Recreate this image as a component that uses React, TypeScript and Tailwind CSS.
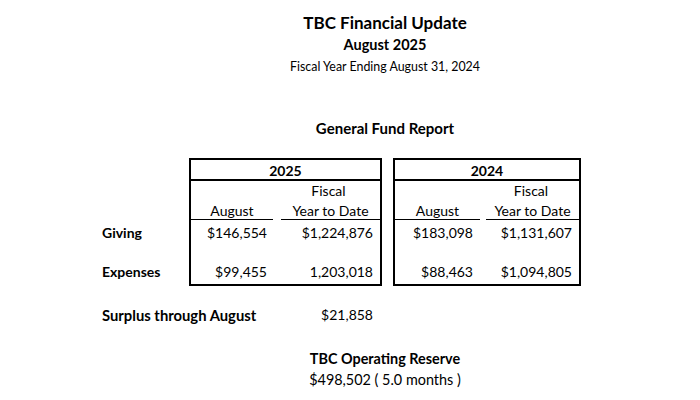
export default function App() {
  const font = { fontFamily: "Lato, 'Open Sans', sans-serif" };
  return (
    <div className="w-[700px] h-[400px] bg-white text-black overflow-hidden" style={font}>
      {/* headings, centered over the tables */}
      <div className="ml-[189px] w-[392px] text-center">
        <div className="pt-[12px] h-[36px] text-[17px] font-bold leading-[22px]">TBC Financial Update</div>
        <div className="h-[23px] text-[14.5px] font-bold leading-[18px]">August 2025</div>
        <div className="h-[60px] text-[12.4px] leading-[16px]">Fiscal Year Ending August 31, 2024</div>
        <div className="h-[39px] text-[15px] font-bold leading-[18px]">General Fund Report</div>
      </div>

      {/* fund table */}
      <div className="flex pl-[102px] text-[14px]">
        <div className="w-[87px] font-bold">
          <div className="h-[62px]" />
          <div className="h-[26px] leading-[26px]">Giving</div>
          <div className="h-[14px]" />
          <div className="h-[23px] leading-[23px]">Expenses</div>
        </div>

        <YearBox year="2025" w="w-[193px]" cols="grid-cols-[86px_1fr]" wide aug="$146,554" ytd="$1,224,876" augExp="$99,455" ytdExp="1,203,018" />
        <div className="w-[11px]" />
        <YearBox year="2024" w="w-[188px]" cols="grid-cols-[88px_1fr]" aug="$183,098" ytd="$1,131,607" augExp="$88,463" ytdExp="$1,094,805" />
      </div>

      {/* surplus */}
      <div className="flex pl-[102px] mt-[19px] text-[14px] leading-[20px]">
        <div className="w-[280px] flex justify-between pr-[9px]">
          <span className="font-bold text-[14.8px]">Surplus through August</span>
          <span>$21,858</span>
        </div>
      </div>

      {/* reserve */}
      <div className="ml-[189px] w-[392px] text-center mt-[23px] text-[14.4px] leading-[22px]">
        <div className="font-bold">TBC Operating Reserve</div>
        <div className="-mt-[1px]">$498,502 ( 5.0 months )</div>
      </div>
    </div>
  );
}

function YearBox(props: {
  year: string;
  w: string;
  cols: string;
  wide?: boolean;
  aug: string;
  ytd: string;
  augExp: string;
  ytdExp: string;
}) {
  const left = props.wide ? "mr-[4px]" : "mr-[3px]";
  const right = props.wide ? "ml-[4px]" : "ml-[3px]";
  return (
    <div className={`${props.w} border-2 border-black`}>
      <div className="h-[21px] leading-[21px] text-center font-bold border-b-2 border-black">{props.year}</div>
      <div className={`grid ${props.cols}`}>
        <div className="h-[20px]" />
        <div className="h-[20px] leading-[20px] text-center">Fiscal</div>
        <div className={`h-[19px] leading-[19px] text-center border-b border-black ${left}`}>August</div>
        <div className={`h-[19px] leading-[19px] text-center border-b border-black ${right}`}>Year to Date</div>
        <div className="h-[26px] leading-[26px] text-right pr-[10px]">{props.aug}</div>
        <div className="h-[26px] leading-[26px] text-right pr-[7px]">{props.ytd}</div>
        <div className="h-[14px]" />
        <div className="h-[14px]" />
        <div className="h-[24px] leading-[23px] text-right pr-[10px]">{props.augExp}</div>
        <div className="h-[24px] leading-[23px] text-right pr-[7px]">{props.ytdExp}</div>
      </div>
    </div>
  );
}
